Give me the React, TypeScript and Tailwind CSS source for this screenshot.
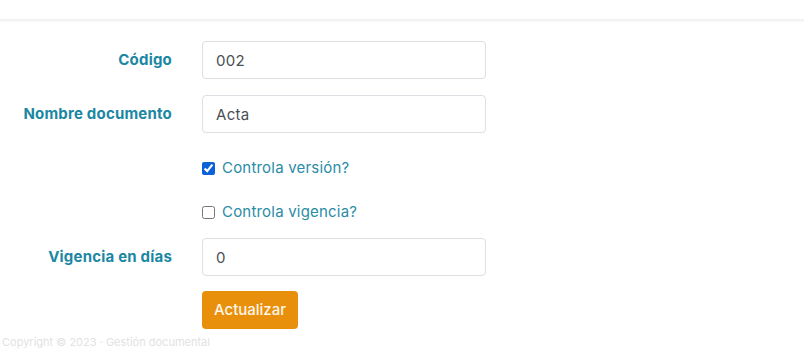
import { useState } from "react";

// form for editing a document type
export default function App() {
  const [codigo, setCodigo] = useState("002");
  const [nombre, setNombre] = useState("Acta");
  const [version, setVersion] = useState(true);
  const [vigencia, setVigencia] = useState(false);
  const [dias, setDias] = useState("0");

  const label = "w-[172px] shrink-0 text-right text-[15px] font-bold tracking-[0.2px] text-[#1b87a3]";
  const input =
    "ml-[30px] h-[38px] w-[284px] rounded-[4px] border border-[#dcdfe3] bg-white px-[13px] text-[15px] tracking-[0.3px] text-[#4a4f55] outline-none";
  const check =
    "ml-[202px] mt-[26px] flex h-[18px] items-center gap-[7px] text-[15px] tracking-[0.2px] text-[#2a8ca6]";

  return (
    <div
      className="min-h-[350px] w-[804px] overflow-hidden bg-white"
      style={{ fontFamily: "Inter, 'Open Sans', sans-serif" }}
    >
      {/* top bar, mostly cut off */}
      <div className="h-[21px] border-b-2 border-[#f2f2f2] shadow-[0_1px_2px_rgba(0,0,0,0.03)]" />

      <form className="flex flex-col pt-[20px]" onSubmit={(e) => e.preventDefault()}>
        <div className="flex items-center">
          <label className={label}>Código</label>
          <input className={input} value={codigo} onChange={(e) => setCodigo(e.target.value)} />
        </div>

        <div className="mt-[16px] flex items-center">
          <label className={label}>Nombre documento</label>
          <input className={input} value={nombre} onChange={(e) => setNombre(e.target.value)} />
        </div>

        <label className={check}>
          <input
            type="checkbox"
            className="m-0 h-[13px] w-[13px] accent-[#0b62d8]"
            checked={version}
            onChange={(e) => setVersion(e.target.checked)}
          />
          Controla versión?
        </label>

        <label className={check}>
          <input
            type="checkbox"
            className="m-0 h-[13px] w-[13px] accent-[#0b62d8]"
            checked={vigencia}
            onChange={(e) => setVigencia(e.target.checked)}
          />
          Controla vigencia?
        </label>

        <div className="mt-[17px] flex items-center">
          <label className={label}>Vigencia en días</label>
          <input className={input} value={dias} onChange={(e) => setDias(e.target.value)} />
        </div>

        <div className="ml-[202px] mt-[15px]">
          <button
            type="submit"
            className="h-[38px] w-[96px] rounded-[4px] bg-[#e8900c] text-[15px] font-medium text-[#fdf6e8]"
          >
            Actualizar
          </button>
        </div>

        <p className="mt-[7px] pl-[2px] text-[11px] leading-[13px] text-[#e2e2e2]">
          Copyright © 2023 · Gestión documental
        </p>
      </form>
    </div>
  );
}
